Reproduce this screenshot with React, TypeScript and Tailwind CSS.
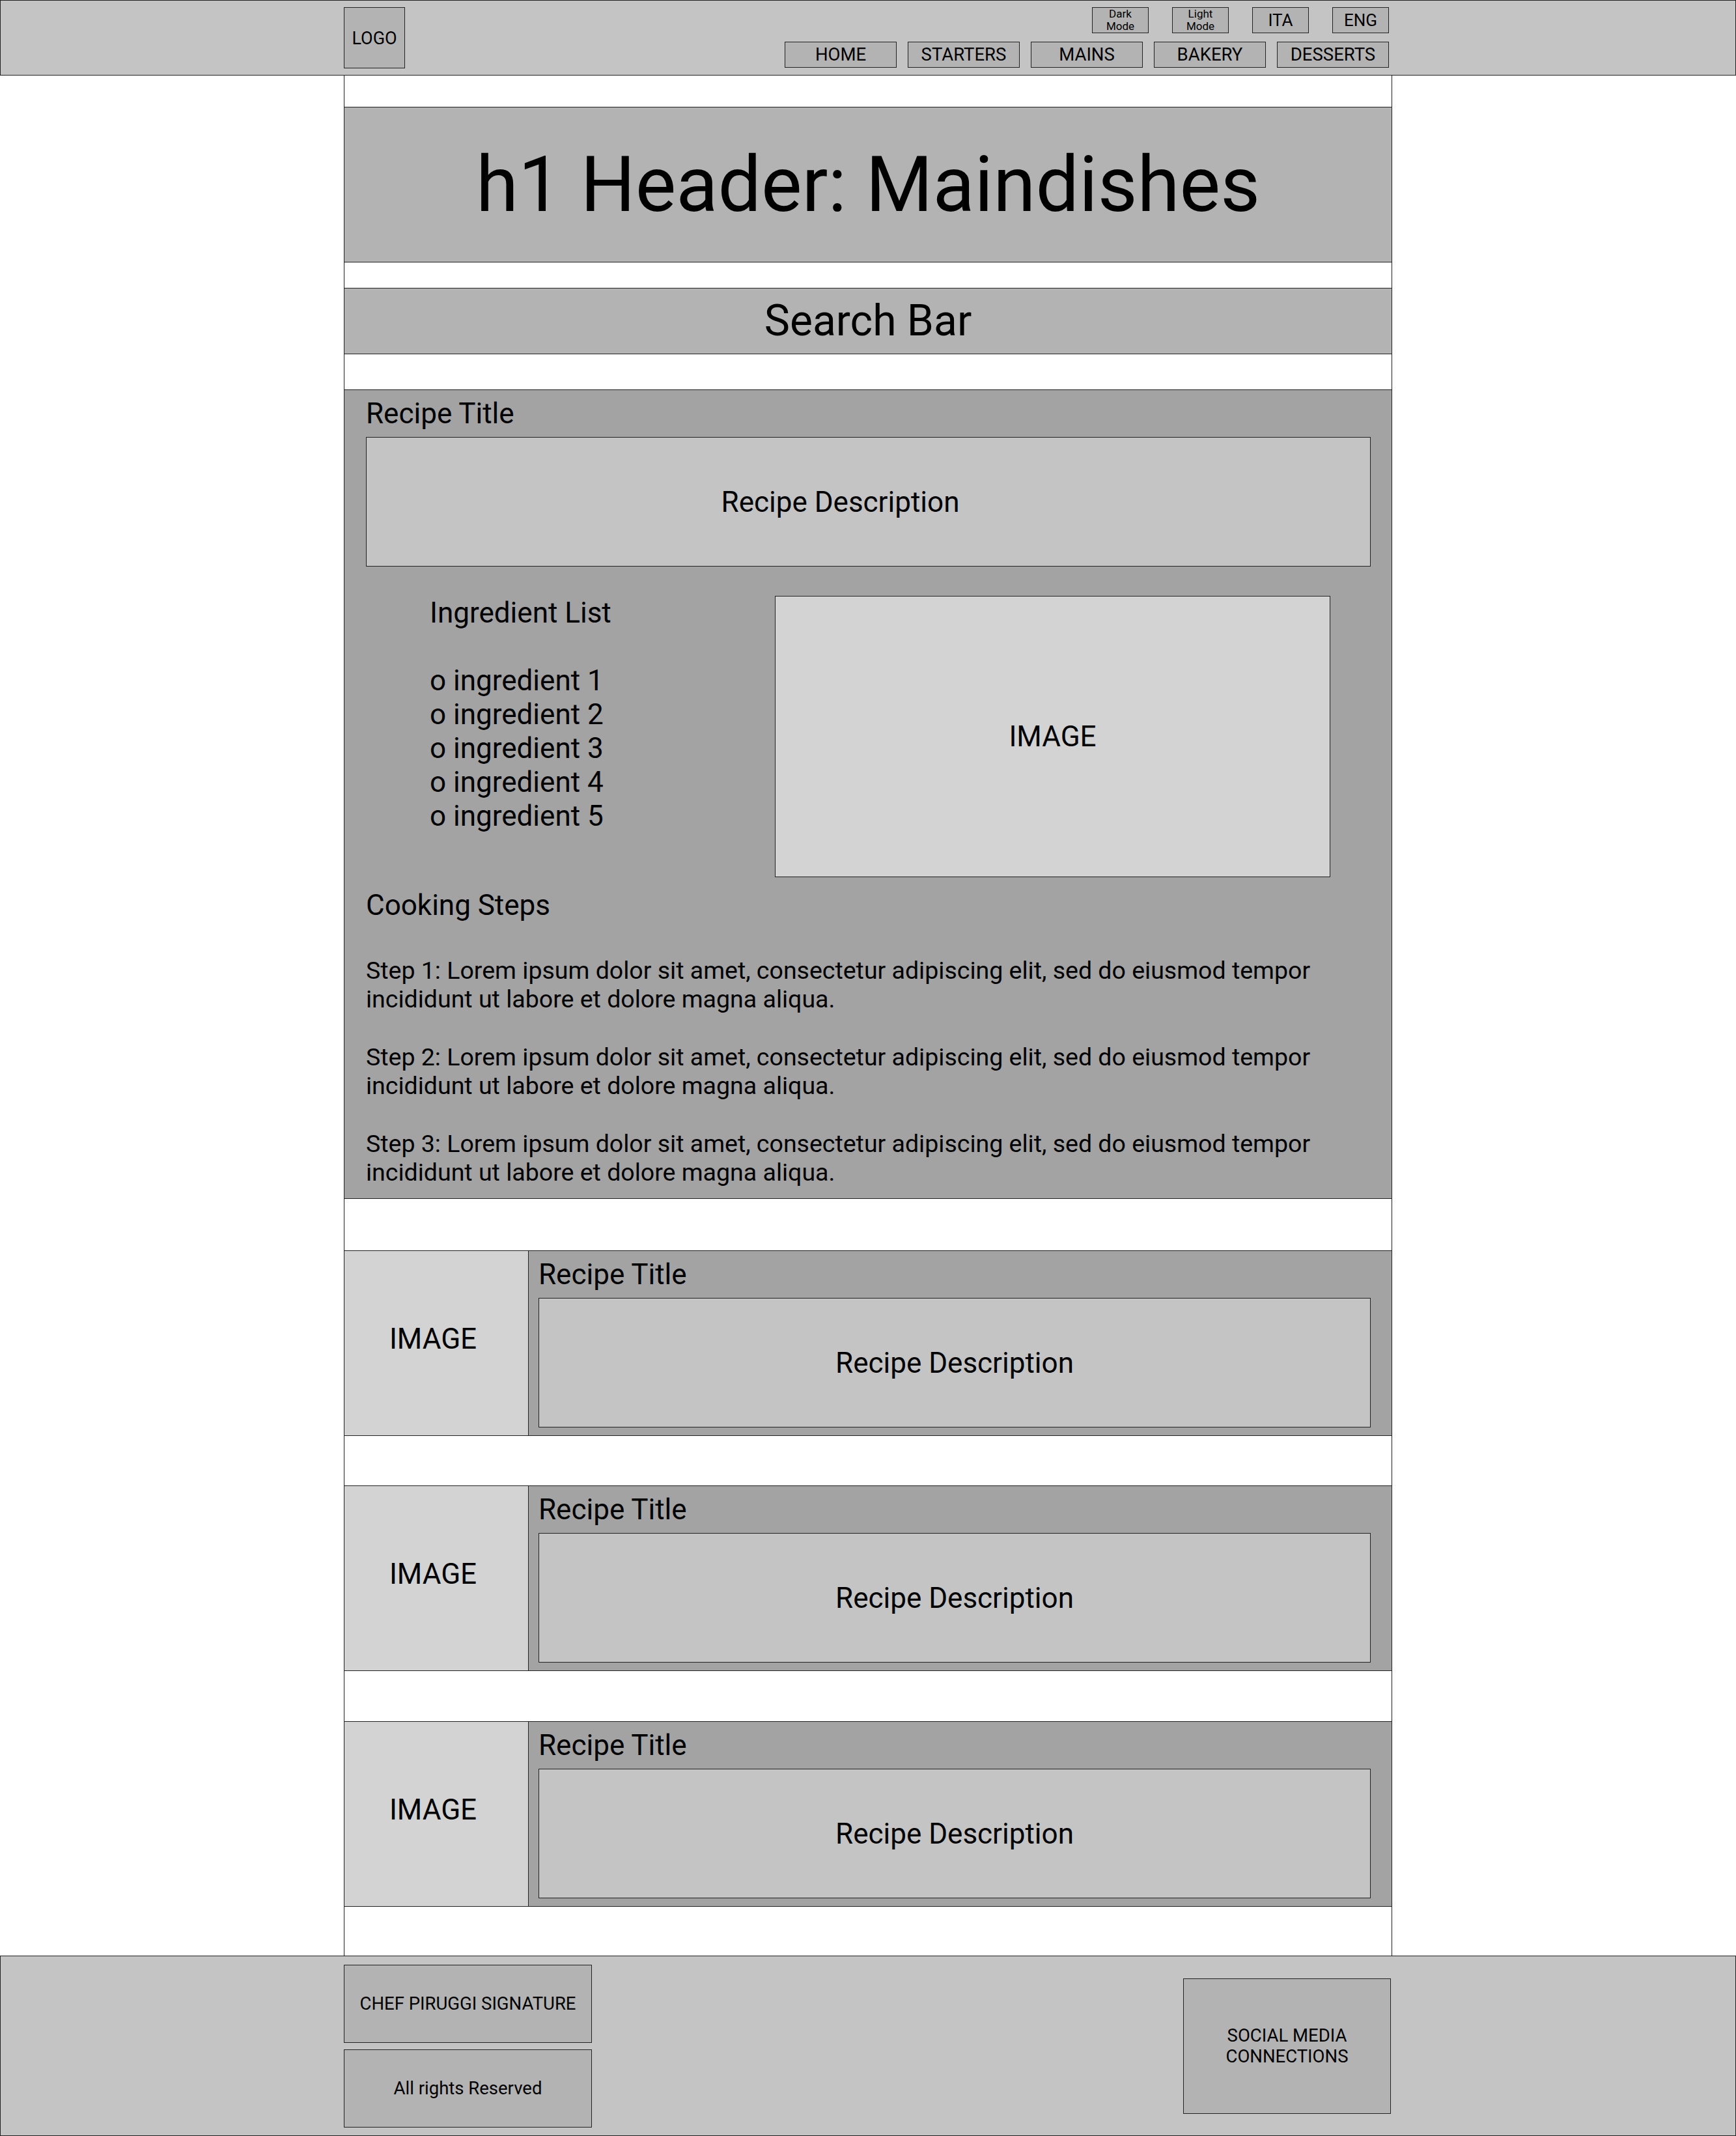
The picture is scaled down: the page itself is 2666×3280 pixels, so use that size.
const topButtons = [
  { label: "Dark\nMode", small: true },
  { label: "Light\nMode", small: true },
  { label: "ITA", small: false },
  { label: "ENG", small: false },
];

const navItems = ["HOME", "STARTERS", "MAINS", "BAKERY", "DESSERTS"];

const ingredients = [1, 2, 3, 4, 5];

const stepText =
  "Lorem ipsum dolor sit amet, consectetur adipiscing elit, sed do eiusmod tempor incididunt ut labore et dolore magna aliqua.";

function RecipeCard({ className }: { className: string }) {
  return (
    <div className={`-mx-px flex h-[285px] shrink-0 border border-[#222] ${className}`}>
      {/* image placeholder */}
      <div className="flex w-[283px] items-center justify-center border-r border-[#222] bg-[#d3d3d3] pr-[10px] pb-[14px] text-[44px]">
        IMAGE
      </div>
      <div className="flex flex-1 flex-col bg-[#a3a3a3] pt-[10px] pr-[32px] pb-[12px] pl-[15px]">
        <div className="text-[44px] leading-[52px]">Recipe Title</div>
        <div className="mt-[10px] flex flex-1 items-center justify-center border border-[#222] bg-[#c4c4c4] text-[44px]">
          Recipe Description
        </div>
      </div>
    </div>
  );
}

export default function App() {
  return (
    <div className="flex h-[3280px] w-[2666px] flex-col bg-white font-['Roboto',sans-serif] text-black">
      {/* Top bar */}
      <header className="h-[116px] shrink-0 border border-[#222] bg-[#c4c4c4]">
        <div className="mx-auto flex w-[1610px] justify-between">
          <div className="mt-[10px] flex h-[94px] w-[94px] items-center justify-center border border-[#222] bg-[#b3b3b3] pt-[2px] text-[27px]">
            LOGO
          </div>
          <div className="flex flex-col items-end gap-[13px] pt-[10px] pr-[5px]">
            <div className="flex gap-[36px]">
              {topButtons.map((b) => (
                <div
                  key={b.label}
                  className={`flex h-[40px] w-[87px] items-center justify-center border border-[#222] bg-[#b3b3b3] text-center whitespace-pre-line ${
                    b.small ? "text-[17px] leading-[19px]" : "text-[26px] leading-none"
                  }`}
                >
                  {b.label}
                </div>
              ))}
            </div>
            <nav className="flex gap-[17px]">
              {navItems.map((item) => (
                <div
                  key={item}
                  className="flex h-[40px] w-[172px] items-center justify-center border border-[#222] bg-[#b3b3b3] text-[27.5px] leading-none"
                >
                  {item}
                </div>
              ))}
            </nav>
          </div>
        </div>
      </header>

      {/* Page column */}
      <main className="mx-auto flex w-[1610px] flex-1 flex-col border-x border-[#222]">
        <div className="-mx-px mt-[48px] flex h-[239px] shrink-0 items-center justify-center border border-[#222] bg-[#b3b3b3]">
          <h1 className="text-[118px] leading-none font-normal">h1 Header: Maindishes</h1>
        </div>

        <div className="-mx-px mt-[39px] flex h-[102px] shrink-0 items-center justify-center border border-[#222] bg-[#b3b3b3] text-[66px] leading-none">
          Search Bar
        </div>

        {/* Featured recipe */}
        <section className="-mx-px mt-[54px] h-[1243px] shrink-0 border border-[#222] bg-[#a3a3a3] pt-[10px] pr-[32px] pl-[33px]">
          <div className="text-[44px] leading-[52px]">Recipe Title</div>
          <div className="mt-[10px] flex h-[199px] items-center justify-center border border-[#222] bg-[#c4c4c4] pr-[86px] text-[44px]">
            Recipe Description
          </div>

          <div className="mt-[45px] flex">
            <div className="w-[628px] pl-[98px] text-[44px] leading-[52px]">
              <div>Ingredient List</div>
              <div className="h-[52px]" />
              {ingredients.map((n) => (
                <div key={n}>o ingredient {n}</div>
              ))}
            </div>
            <div className="flex h-[432px] w-[853px] items-center justify-center border border-[#222] bg-[#d3d3d3] text-[44px]">
              IMAGE
            </div>
          </div>

          <div className="mt-[17px] text-[44px] leading-[52px]">Cooking Steps</div>
          <div className="mt-[52px] flex flex-col gap-[45px] text-[37.5px] leading-[44px]">
            {[1, 2, 3].map((n) => (
              <p key={n}>
                Step {n}: {stepText}
              </p>
            ))}
          </div>
        </section>

        <RecipeCard className="mt-[79px]" />
        <RecipeCard className="mt-[76px]" />
        <RecipeCard className="mt-[77px]" />
      </main>

      {/* Footer */}
      <footer className="h-[277px] shrink-0 border border-[#222] bg-[#c4c4c4]">
        <div className="mx-auto flex h-full w-[1610px] items-center justify-between">
          <div className="flex w-[381px] flex-col gap-[10px] text-[27.5px]">
            <div className="flex h-[120px] items-center justify-center border border-[#222] bg-[#b3b3b3]">
              CHEF PIRUGGI SIGNATURE
            </div>
            <div className="flex h-[120px] items-center justify-center border border-[#222] bg-[#b3b3b3]">
              All rights Reserved
            </div>
          </div>
          <div className="mr-[2px] flex h-[208px] w-[319px] items-center justify-center border border-[#222] bg-[#b3b3b3] text-center text-[27.5px] leading-[32px]">
            SOCIAL MEDIA
            <br />
            CONNECTIONS
          </div>
        </div>
      </footer>
    </div>
  );
}
